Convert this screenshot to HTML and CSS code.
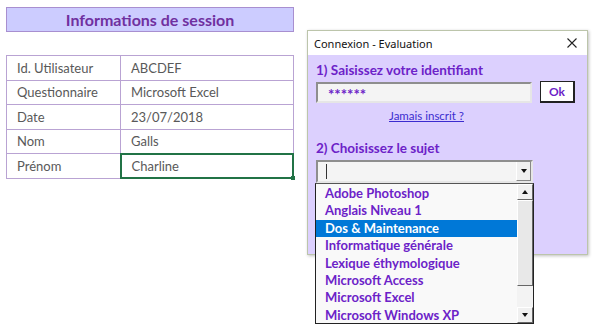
FILE: index.html
```html
<!DOCTYPE html>
<html lang="fr">
<head>
    <meta charset="UTF-8">
    <title>Connexion - Evaluation</title>
    <link rel="stylesheet" href="styles.css">
</head>
<body>
<div class="page">
    <div class="sheet">
        <div class="banner">Informations de session</div>
        <table class="info">
            <tr><td>Id. Utilisateur</td><td>ABCDEF</td></tr>
            <tr><td>Questionnaire</td><td>Microsoft Excel</td></tr>
            <tr><td>Date</td><td>23/07/2018</td></tr>
            <tr><td>Nom</td><td>Galls</td></tr>
            <tr><td>Prénom</td><td class="active">Charline<span class="handle"></span></td></tr>
        </table>
    </div>

    <div class="dialog">
        <div class="titlebar">
            <span>Connexion - Evaluation</span>
            <svg class="close" width="10" height="10" viewBox="0 0 10 10">
                <path d="M0.5 0.5 L9.5 9.5 M9.5 0.5 L0.5 9.5" stroke="#222" stroke-width="1.1" fill="none"/>
            </svg>
        </div>
        <div class="dialog-body">
            <h3>1) Saisissez votre identifiant</h3>
            <div class="login-row">
                <div class="field">******</div>
                <button class="btn-ok">Ok</button>
            </div>
            <div class="link-row"><a href="#">Jamais inscrit ?</a></div>
            <h3>2) Choisissez le sujet</h3>
            <div class="combo">
                <span class="caret"></span>
                <span class="arrow"><i class="tri down"></i></span>
                <div class="list">
                    <ul>
                        <li>Adobe Photoshop</li>
                        <li>Anglais Niveau 1</li>
                        <li class="selected">Dos &amp; Maintenance</li>
                        <li>Informatique générale</li>
                        <li>Lexique éthymologique</li>
                        <li>Microsoft Access</li>
                        <li>Microsoft Excel</li>
                        <li>Microsoft Windows XP</li>
                    </ul>
                    <div class="scroll">
                        <span class="sbtn"><i class="tri up"></i></span>
                        <span class="thumb"></span>
                        <span class="track"></span>
                        <span class="sbtn"><i class="tri down"></i></span>
                    </div>
                </div>
            </div>
        </div>
    </div>
</div>
</body>
</html>
```

FILE: styles.css
```css
* {
    box-sizing: border-box;
}
body {
    margin: 0;
    background: #fff;
    font-family: Lato, "Noto Sans", sans-serif;
}
.page {
    display: flex;
    align-items: flex-start;
    min-height: 330px;
}

/* feuille Excel */
.sheet {
    width: 294px;
    padding: 7px 0 0 6px;
}
.banner {
    height: 25px;
    line-height: 23px;
    text-align: center;
    background: #ccccff;
    border: 1px solid #a88fd0;
    color: #7030a0;
    font-weight: bold;
    font-size: 16px;
}
.info {
    width: 288px;
    margin-top: 23px;
    border-collapse: collapse;
    font-size: 13px;
    color: #595959;
}
.info td {
    height: 24.5px;
    padding: 0 0 0 10px;
    border: 1px solid #b9a3d3;
}
.info td:first-child {
    width: 114px;
}
.info td.active {
    position: relative;
    border: 2px solid #217346;
    padding-left: 10px;
}
.handle {
    position: absolute;
    right: -3px;
    bottom: -3px;
    width: 4px;
    height: 4px;
    background: #217346;
}

/* fenêtre */
.dialog {
    position: relative;
    width: 281px;
    height: 225px;
    margin: 30px 0 0 13px;
    background: #dcd0fe;
    border: 1px solid #bcc5ab;
    box-shadow: 1px 1px 3px rgba(0, 0, 0, .25);
}
.titlebar {
    display: flex;
    justify-content: space-between;
    align-items: center;
    height: 24px;
    padding: 0 10px 0 6px;
    background: #fff;
    font-family: "Noto Sans", sans-serif;
    font-size: 11px;
    color: #111;
}
.dialog-body {
    padding: 5px 8px 0 8px;
}
.dialog-body h3 {
    margin: 0;
    font-size: 13.5px;
    line-height: 20px;
    color: #6c22c8;
}
.login-row {
    display: flex;
    align-items: center;
    margin-top: 1px;
}
.field {
    width: 216px;
    height: 21px;
    padding-left: 10px;
    background: #f4f4f4;
    border: 2px solid #8e8e8e;
    border-right-color: #e6e6e6;
    border-bottom-color: #e6e6e6;
    color: #6c22c8;
    font-weight: bold;
    font-size: 15px;
    line-height: 21px;
}
.btn-ok {
    width: 35px;
    height: 22px;
    margin-left: 8px;
    padding: 0;
    background: #fff;
    border: 1px solid #222;
    border-right-width: 2px;
    border-bottom-width: 2px;
    color: #6c22c8;
    font-family: Lato, sans-serif;
    font-weight: bold;
    font-size: 12px;
}
.link-row {
    padding: 1px 0 0 73px;
    height: 35px;
}
.link-row a {
    color: #3b2ccf;
    font-size: 11.5px;
}
.combo {
    position: relative;
    width: 217px;
    height: 23px;
    margin-top: 2px;
    background: #f4f4f4;
    border: 2px solid #8e8e8e;
    border-right-color: #e6e6e6;
    border-bottom-color: #e6e6e6;
}
.caret {
    position: absolute;
    left: 8px;
    top: 2px;
    width: 1px;
    height: 15px;
    background: #333;
}
.combo > .arrow {
    position: absolute;
    right: 0;
    top: 0;
    width: 15px;
    height: 19px;
    display: flex;
    align-items: center;
    justify-content: center;
    background: #f0f0f0;
    border-left: 1px solid #fff;
    border-right: 1px solid #888;
    border-bottom: 1px solid #888;
}
.tri {
    display: block;
    width: 0;
    height: 0;
    border-left: 3.5px solid transparent;
    border-right: 3.5px solid transparent;
}
.tri.down {
    border-top: 4px solid #111;
}
.tri.up {
    border-bottom: 4px solid #111;
}

/* liste déroulante */
.list {
    position: absolute;
    left: -3px;
    top: 21px;
    z-index: 2;
    display: flex;
    width: 219px;
    height: 141px;
    background: #f9f9f9;
    border: 1px solid #222;
    border-top-color: #555;
}
.list ul {
    flex: 1;
    margin: 0;
    padding: 1px 0 0 0;
    list-style: none;
}
.list li {
    height: 17.4px;
    line-height: 17.4px;
    padding-left: 9px;
    color: #6c22c8;
    font-weight: bold;
    font-size: 13px;
}
.list li.selected {
    background: #0078d7;
    color: #fff;
}
.scroll {
    display: flex;
    flex-direction: column;
    width: 16px;
    background: #ececec;
}
.sbtn {
    display: flex;
    align-items: center;
    justify-content: center;
    height: 16px;
    background: #f0f0f0;
    border: 1px solid #fff;
    border-right-color: #666;
    border-bottom-color: #666;
}
.thumb {
    height: 86px;
    background: #e8e8e8;
    border: 1px solid #fff;
    border-right-color: #666;
    border-bottom-color: #666;
}
.track {
    flex: 1;
    background: #f3f3f3;
}
```
